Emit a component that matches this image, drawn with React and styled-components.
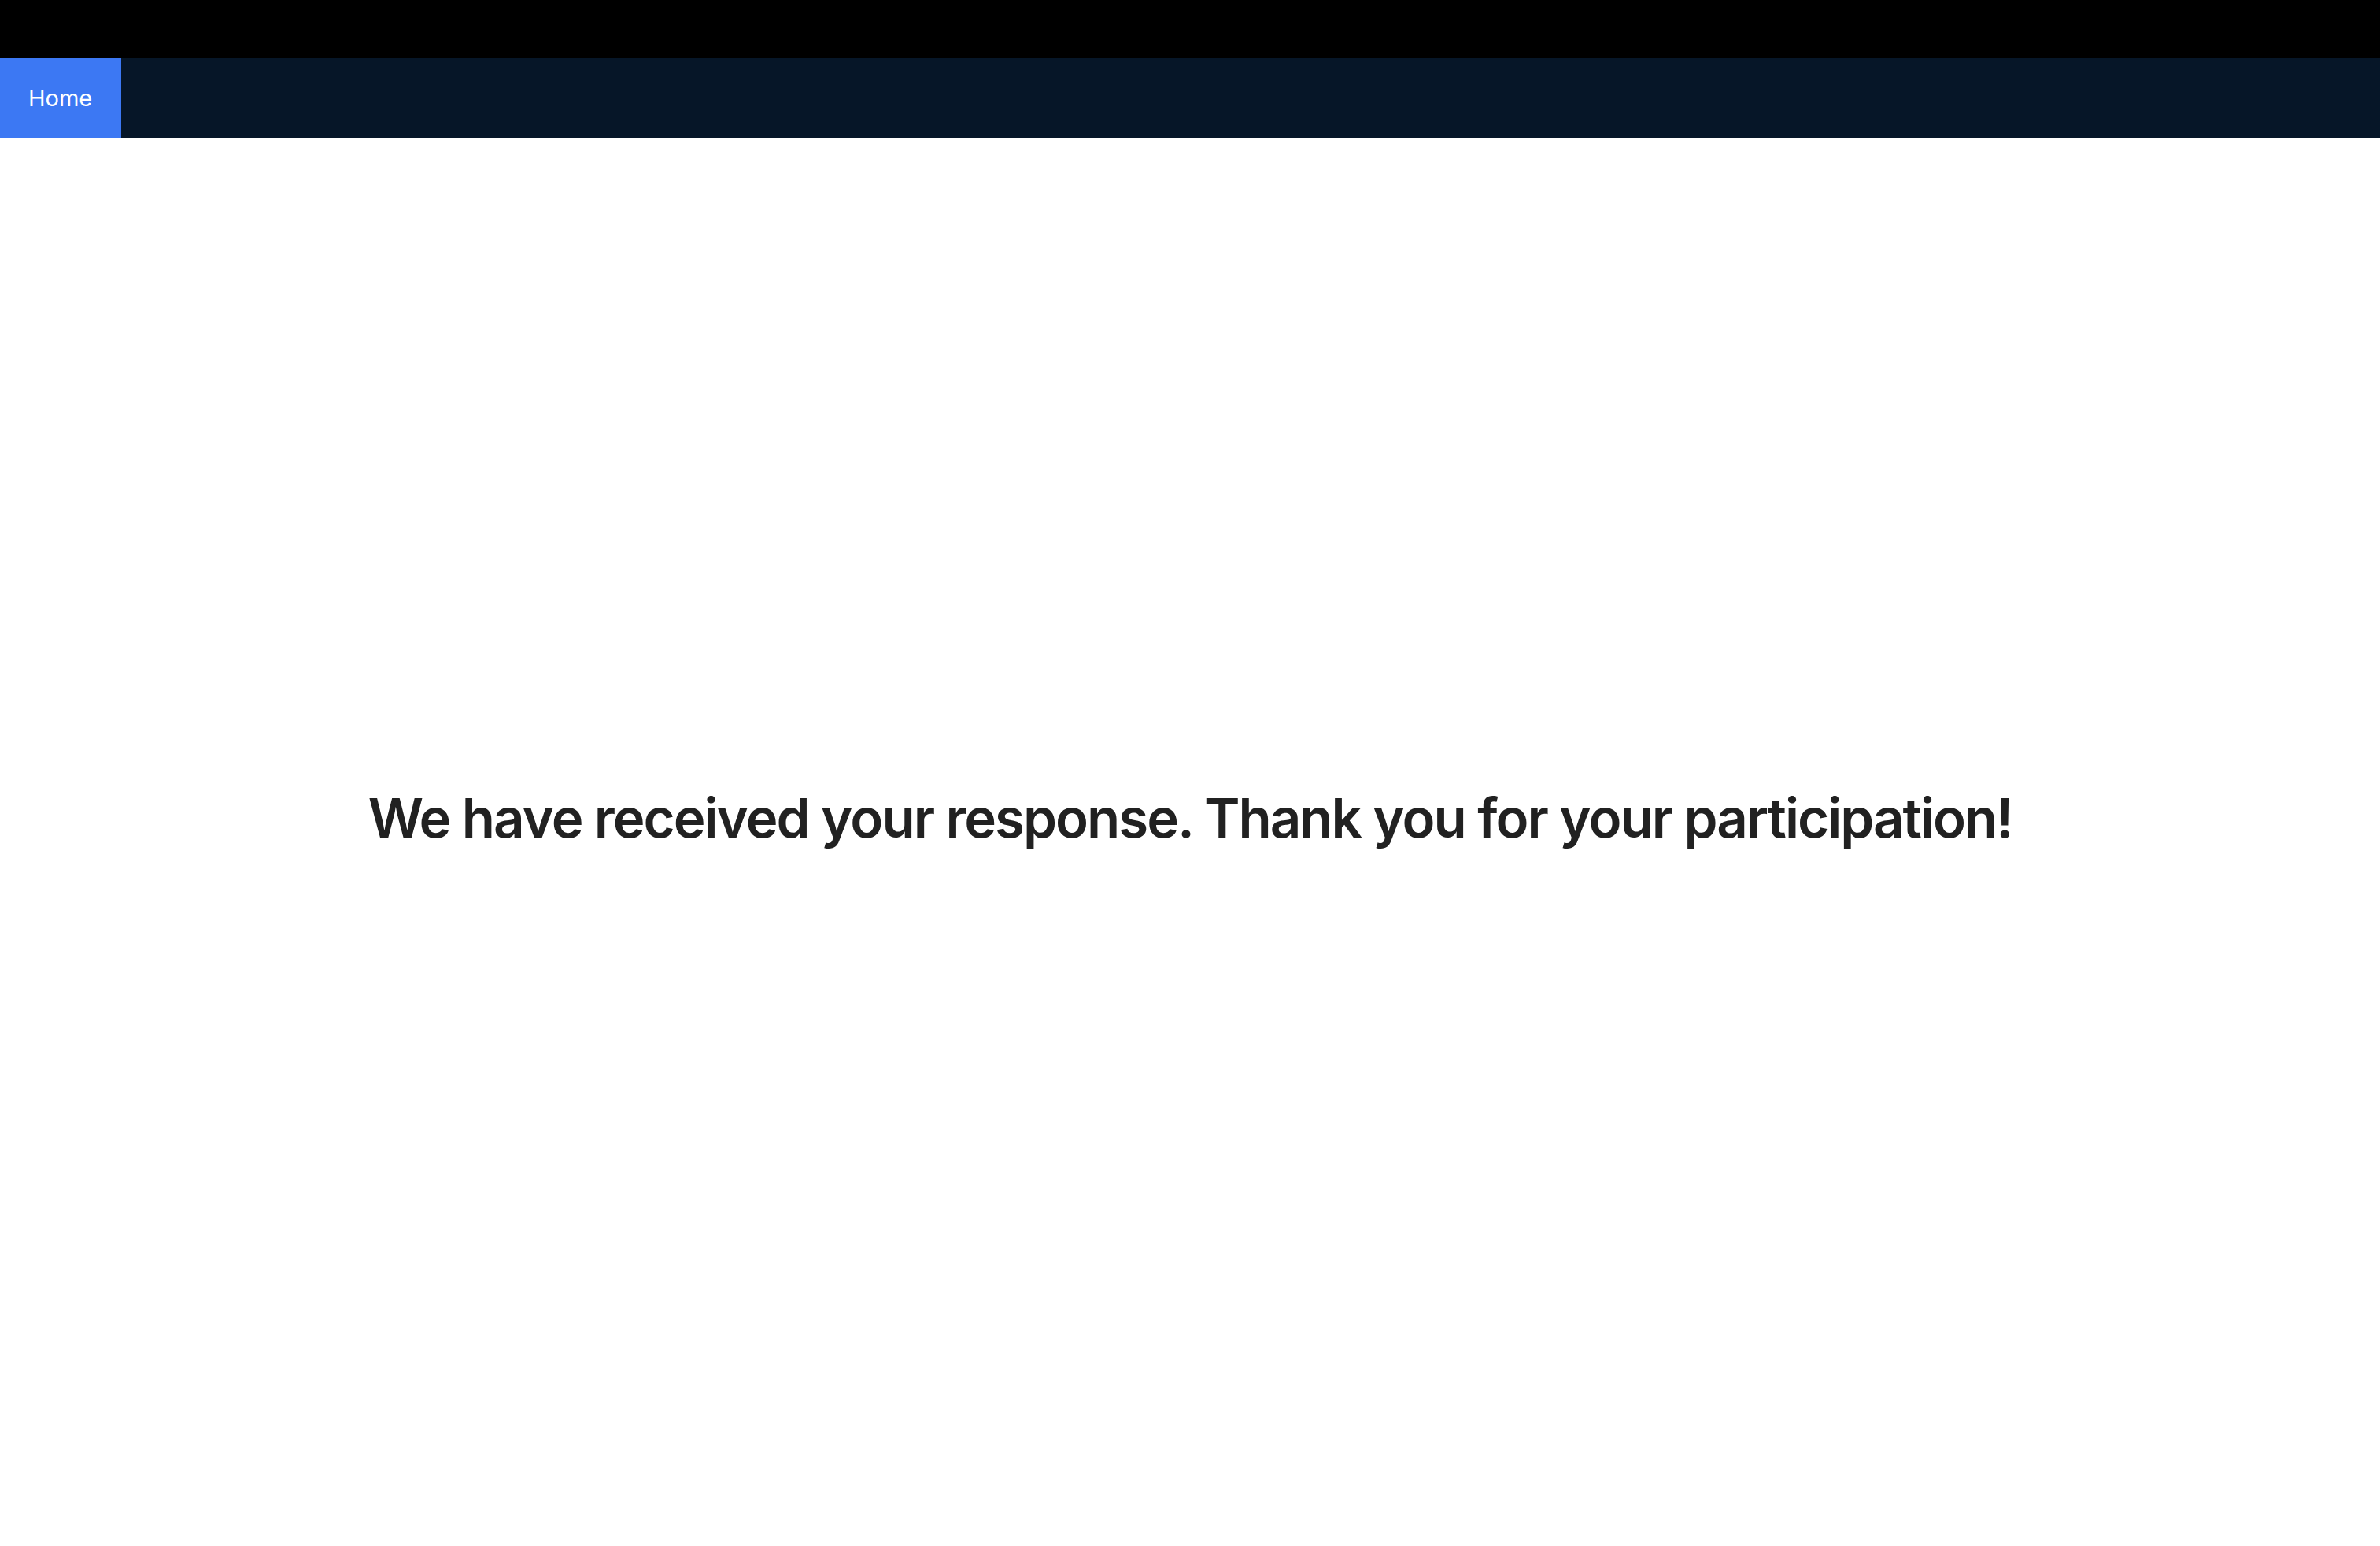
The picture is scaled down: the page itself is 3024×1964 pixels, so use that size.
import React from "react";
import styled, { createGlobalStyle } from "styled-components";

const GlobalStyle = createGlobalStyle`
  html, body, #root {
    margin: 0;
    padding: 0;
    height: 100%;
  }
  body {
    font-family: Inter, "Noto Sans", "Liberation Sans", sans-serif;
    background: #fff;
    color: #212121;
  }
`;

const Page = styled.div`
  display: flex;
  flex-direction: column;
  min-height: 100vh;
`;

const TopStrip = styled.div`
  height: 74px;
  background-color: #000;
`;

const Navbar = styled.nav`
  height: 101px;
  background-color: #061628;
  display: flex;
  align-items: stretch;
`;

const NavLink = styled.a`
  display: flex;
  align-items: center;
  padding: 0 37px 0 36px;
  font-size: 29px;
  color: #fff;
  text-decoration: none;
  background-color: ${(p) => (p.active ? "#3c78f3" : "transparent")};
  cursor: pointer;
`;

const Main = styled.main`
  flex: 1;
  display: flex;
  align-items: center;
  justify-content: center;
  padding-bottom: 61px;
`;

const Message = styled.h1`
  margin: 0;
  font-size: 69px;
  font-weight: 600;
  line-height: 1.2;
  letter-spacing: -2px;
  color: #212121;
`;

const App = () => {
  return (
    <Page>
      <GlobalStyle />
      <TopStrip />
      <Navbar>
        <NavLink active>Home</NavLink>
      </Navbar>
      <Main>
        <Message>
          We have received your response. Thank you for your participation!
        </Message>
      </Main>
    </Page>
  );
};

export default App;
